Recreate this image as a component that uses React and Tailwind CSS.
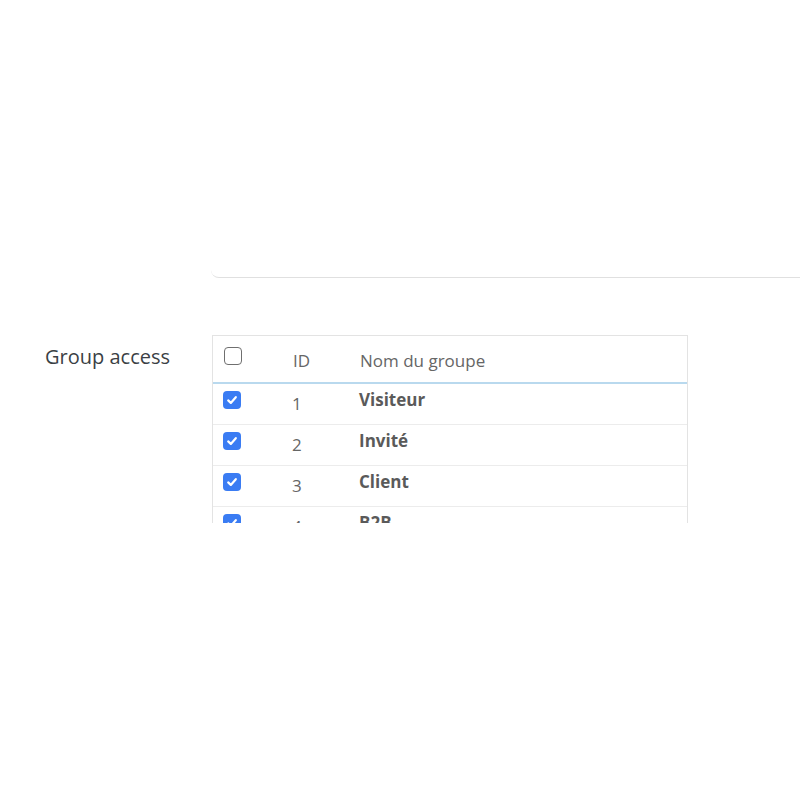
import React from "react";

function Checked() {
  return (
    <span className="flex h-[18px] w-[18px] items-center justify-center rounded-[4px] bg-[#3a7cf3]">
      <svg width="12" height="12" viewBox="0 0 12 12" fill="none">
        <path d="M2.2 6.4 L4.8 8.9 L9.8 3.2" stroke="#fff" strokeWidth="2.2" strokeLinecap="round" strokeLinejoin="round" />
      </svg>
    </span>
  );
}

function Unchecked() {
  return <span className="block h-[18px] w-[18px] rounded-[4px] border-[1.5px] border-[#6f6f6f] bg-white" />;
}

const rows = [
  { id: 1, name: "Visiteur" },
  { id: 2, name: "Invité" },
  { id: 3, name: "Client" },
  { id: 4, name: "B2B" },
];

export default function App() {
  return (
    <div className="h-[800px] w-[800px] overflow-hidden bg-white" style={{ fontFamily: '"Open Sans", "Noto Sans", sans-serif' }}>
      <div className="ml-[211px] mr-[-20px] h-[278px] rounded-bl-[8px] border-b border-[#e0e0e0] bg-white" />
      <div className="mt-[57px] flex">
        <div className="w-[212px] pl-[45px] pt-[8px] text-[20px] leading-[28px] text-[#3b3f45]">Group access</div>
        <div className="h-[188px] w-[476px] overflow-hidden border border-b-0 border-[#e3e3e3]">
          <div className="flex h-[48px] border-b-2 border-[#b9d9ee]">
            <div className="w-[80px] pl-[11px] pt-[11px]">
              <Unchecked />
            </div>
            <div className="w-[67px] pt-[13px] text-[17px] leading-[24px] text-[#666]">ID</div>
            <div className="flex-1 pt-[13px] text-[17px] leading-[24px] text-[#666]">Nom du groupe</div>
          </div>
          {rows.map((r) => (
            <div key={r.id} className="flex h-[41px] border-b border-[#ececec]">
              <div className="w-[79px] pl-[10px] pt-[7px]">
                <Checked />
              </div>
              <div className="w-[67px] pt-[8px] text-[17px] leading-[24px] text-[#666]">{r.id}</div>
              <div className="flex-1 pt-[4px] text-[17px] font-bold leading-[24px] text-[#5a5a5a]">{r.name}</div>
            </div>
          ))}
        </div>
      </div>
    </div>
  );
}
